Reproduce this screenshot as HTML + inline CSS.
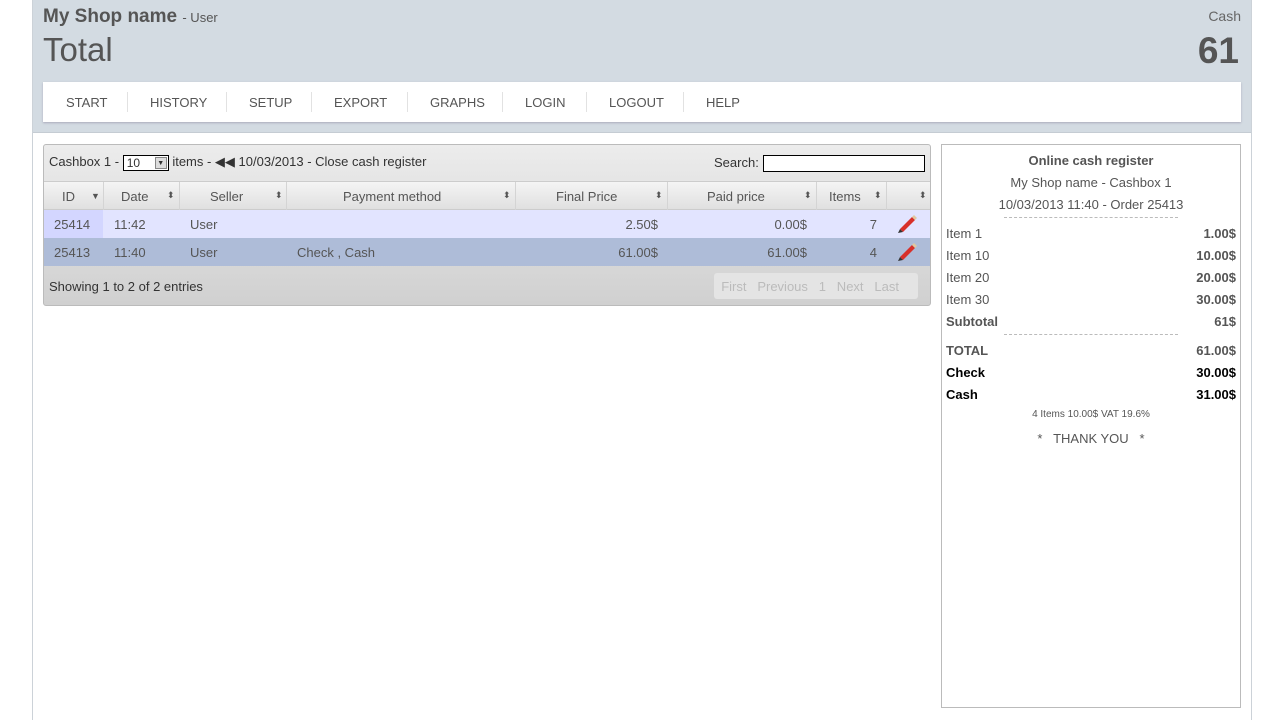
<!DOCTYPE html>
<html><head><meta charset="utf-8"><style>
*{margin:0;padding:0;box-sizing:border-box}
body{width:1280px;height:720px;background:#fff;font-family:"Liberation Sans",sans-serif;color:#555;position:relative;overflow:hidden;font-size:13px}
.wrap{position:absolute;left:32px;top:0;width:1220px;height:720px;border-left:1px solid #ccd2d8;border-right:1px solid #ccd2d8}
.hdr{position:absolute;left:0;top:0;width:1218px;height:133px;background:#d3dbe2;border-bottom:1px solid #c5ccd3}
.abs{position:absolute}
.nav{position:absolute;left:10px;top:82px;width:1198px;height:40px;background:#fff;box-shadow:0 1px 2px #aab}
.nav span{position:absolute;top:13px;font-size:13px;color:#555}
.nav i{position:absolute;top:10px;width:1px;height:20px;background:#e2e2e2}
.tbl{position:absolute;left:43px;top:144px;width:888px;height:162px;border:1px solid #bbb;border-radius:3px;background:linear-gradient(#ececec,#d0d0d0)}
.row{position:absolute;left:0;width:886px;height:28px;font-size:13px}
.row span{position:absolute;top:7px}
.th span{position:absolute;top:7px;color:#555}
.th b{position:absolute;top:0;width:1px;height:28px;background:#d4d4d4}
.arr{color:#999;font-size:9px}
.rc{position:absolute;left:941px;top:144px;width:300px;height:564px;border:1px solid #bbb}
.rc .l{position:absolute;left:4px}
.rc .r{position:absolute;right:4px;font-weight:bold}
.rc div{font-size:13px}
.pen{position:absolute;left:852px;top:4px}
</style></head><body>
<div class="wrap">
<div class="hdr">
<div class="abs" style="left:10px;top:6px;font-size:19px;font-weight:bold;color:#555">My Shop name <span style="font-size:13px;font-weight:normal">- User</span></div>
<div class="abs" style="left:10px;top:31px;font-size:33px;color:#555">Total</div>
<div class="abs" style="right:10px;top:8px;font-size:14px;color:#666">Cash</div>
<div class="abs" style="right:12px;top:30px;font-size:37px;font-weight:bold;color:#555">61</div>
<div class="nav">
<span style="left:23px">START</span><i style="left:84px"></i>
<span style="left:107px">HISTORY</span><i style="left:183px"></i>
<span style="left:206px">SETUP</span><i style="left:268px"></i>
<span style="left:291px">EXPORT</span><i style="left:364px"></i>
<span style="left:387px">GRAPHS</span><i style="left:459px"></i>
<span style="left:482px">LOGIN</span><i style="left:543px"></i>
<span style="left:566px">LOGOUT</span><i style="left:640px"></i>
<span style="left:663px">HELP</span>
</div>
</div>
</div>
<div class="tbl">
<div class="abs" style="left:5px;top:9px;font-size:13px;color:#333">Cashbox 1 - <span style="display:inline-block;width:46px;height:16px;border:1px solid #000;background:#fff;vertical-align:middle;font-size:12px;padding-left:3px;position:relative">10<span style="position:absolute;right:1px;top:1px;width:12px;height:12px;background:#ddd;border:1px solid #888;font-size:7px;text-align:center;line-height:11px">▼</span></span> items - ◀◀ 10/03/2013 - Close cash register</div>
<div class="abs" style="left:670px;top:10px;font-size:13px;color:#333">Search:</div>
<div class="abs" style="left:719px;top:10px;width:162px;height:17px;border:1px solid #000;background:#fff"></div>
<div class="row th" style="top:36px;height:29px;background:linear-gradient(#f4f4f4,#e0e0e0);border-top:1px solid #ccc;border-bottom:1px solid #ccc">
<b style="left:59px"></b><b style="left:135px"></b><b style="left:242px"></b><b style="left:471px"></b><b style="left:623px"></b><b style="left:772px"></b><b style="left:842px"></b>
<span style="left:18px">ID</span><span class="arr" style="left:47px;top:9px">▼</span>
<span style="left:77px">Date</span><span class="arr" style="left:123px;top:8px">⬍</span>
<span style="left:166px">Seller</span><span class="arr" style="left:231px;top:8px">⬍</span>
<span style="left:299px">Payment method</span><span class="arr" style="left:459px;top:8px">⬍</span>
<span style="left:512px">Final Price</span><span class="arr" style="left:611px;top:8px">⬍</span>
<span style="left:663px">Paid price</span><span class="arr" style="left:760px;top:8px">⬍</span>
<span style="left:785px">Items</span><span class="arr" style="left:830px;top:8px">⬍</span>
<span class="arr" style="left:875px;top:8px">⬍</span>
</div>
<div class="row" style="top:65px;background:#e2e4ff"><div class="abs" style="left:0;top:0;width:59px;height:28px;background:#d3d6ff"></div>
<span style="left:10px">25414</span><span style="left:70px">11:42</span><span style="left:146px">User</span><span style="right:272px">2.50$</span><span style="right:123px">0.00$</span><span style="right:53px">7</span>
<svg class="pen" width="22" height="20" viewBox="0 0 22 20"><path d="M4 15 L16 3 L19 6 L7 18 Z" fill="#d8302a"/><path d="M16 3 L18 1 L21 4 L19 6Z" fill="#e0c8a0"/><path d="M4 15 L7 18 L2 19Z" fill="#333"/></svg></div>
<div class="row" style="top:93px;background:#aebcd8"><span style="left:10px">25413</span><span style="left:70px">11:40</span><span style="left:146px">User</span><span style="left:253px">Check , Cash</span><span style="right:272px">61.00$</span><span style="right:123px">61.00$</span><span style="right:53px">4</span>
<svg class="pen" width="22" height="20" viewBox="0 0 22 20"><path d="M4 15 L16 3 L19 6 L7 18 Z" fill="#d8302a"/><path d="M16 3 L18 1 L21 4 L19 6Z" fill="#e0c8a0"/><path d="M4 15 L7 18 L2 19Z" fill="#333"/></svg></div>
<div class="abs" style="left:5px;top:134px;color:#333">Showing 1 to 2 of 2 entries</div>
<div class="abs" style="left:670px;top:128px;height:26px;width:204px;background:#e4e4e4;border-radius:3px;color:#bbb;font-size:13px;padding-top:6px;word-spacing:0">&nbsp;&nbsp;First&nbsp;&nbsp; Previous &nbsp;&nbsp;1 &nbsp;&nbsp;Next &nbsp;&nbsp;Last</div>
</div>
<div class="rc">
<div class="abs" style="left:0;width:298px;top:8px;text-align:center;font-weight:bold">Online cash register</div>
<div class="abs" style="left:0;width:298px;top:30px;text-align:center">My Shop name - Cashbox 1</div>
<div class="abs" style="left:0;width:298px;top:52px;text-align:center">10/03/2013 11:40 - Order 25413</div>
<div class="abs" style="left:62px;top:72px;width:174px;border-top:1px dashed #bbb"></div>
<div class="l" style="top:81px">Item 1</div><div class="r" style="top:81px">1.00$</div>
<div class="l" style="top:103px">Item 10</div><div class="r" style="top:103px">10.00$</div>
<div class="l" style="top:125px">Item 20</div><div class="r" style="top:125px">20.00$</div>
<div class="l" style="top:147px">Item 30</div><div class="r" style="top:147px">30.00$</div>
<div class="l" style="top:169px;font-weight:bold">Subtotal</div><div class="r" style="top:169px">61$</div>
<div class="abs" style="left:62px;top:189px;width:174px;border-top:1px dashed #bbb"></div>
<div class="l" style="top:198px;font-weight:bold">TOTAL</div><div class="r" style="top:198px">61.00$</div>
<div class="l" style="top:220px;font-weight:bold;color:#000">Check</div><div class="r" style="top:220px;color:#000">30.00$</div>
<div class="l" style="top:242px;font-weight:bold;color:#000">Cash</div><div class="r" style="top:242px;color:#000">31.00$</div>
<div class="abs" style="left:0;width:298px;top:264px;text-align:center;font-size:10px">4 Items 10.00$ VAT 19.6%</div>
<div class="abs" style="left:0;width:298px;top:286px;text-align:center">*&nbsp;&nbsp; THANK YOU &nbsp;&nbsp;*</div>
</div>
</body></html>
